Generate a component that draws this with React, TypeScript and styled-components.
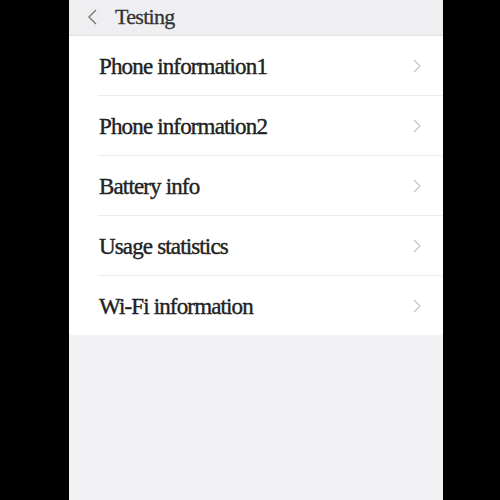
import styled, { createGlobalStyle } from 'styled-components';

const GlobalStyle = createGlobalStyle`
  html, body {
    margin: 0;
    padding: 0;
    background: #000;
  }
`;

const Screen = styled.div`
  width: 374px;
  height: 500px;
  margin-left: 69px;
  background: #f2f2f4;
  display: flex;
  flex-direction: column;
  font-family: 'Liberation Serif', 'Times New Roman', serif;
`;

const Header = styled.header`
  height: 33px;
  padding: 0 0 2px 18px;
  border-bottom: 1px solid #e2e2e4;
  background: #efeff1;
  display: flex;
  align-items: center;
  gap: 18px;
`;

const Title = styled.h1`
  margin: 0;
  font-size: 22px;
  font-weight: normal;
  letter-spacing: -0.7px;
  color: #333;
  -webkit-text-stroke: 0.3px #333;
`;

const List = styled.ul`
  margin: 0;
  padding: 0;
  list-style: none;
  background: #fff;
`;

const Item = styled.li`
  padding-left: 29px;
`;

const Row = styled.div<{ $last?: boolean }>`
  height: 59px;
  display: flex;
  align-items: center;
  justify-content: space-between;
  padding-right: 22px;
  border-bottom: ${(p) => (p.$last ? 'none' : '1px solid #ececee')};
`;

const Label = styled.span`
  font-size: 23px;
  letter-spacing: -0.85px;
  color: #222;
  -webkit-text-stroke: 0.4px #222;
  padding: 2px 0 0 1px;
`;

const BackIcon = () => (
  <svg width="10" height="16" viewBox="0 0 10 16">
    <path d="M9 1 L2 8 L9 15" fill="none" stroke="#777" strokeWidth="1.4" />
  </svg>
);

const ChevronIcon = () => (
  <svg width="8" height="14" viewBox="0 0 8 14">
    <path d="M1 1 L7 7 L1 13" fill="none" stroke="#c4c4c6" strokeWidth="1.2" />
  </svg>
);

const items = [
  'Phone information1',
  'Phone information2',
  'Battery info',
  'Usage statistics',
  'Wi-Fi information',
];

const App = () => {
  return (
    <>
      <GlobalStyle />
      <Screen>
        <Header>
          <BackIcon />
          <Title>Testing</Title>
        </Header>
        <List>
          {items.map((label, i) => (
            <Item key={label}>
              <Row $last={i === items.length - 1}>
                <Label>{label}</Label>
                <ChevronIcon />
              </Row>
            </Item>
          ))}
        </List>
      </Screen>
    </>
  );
};

export default App;
